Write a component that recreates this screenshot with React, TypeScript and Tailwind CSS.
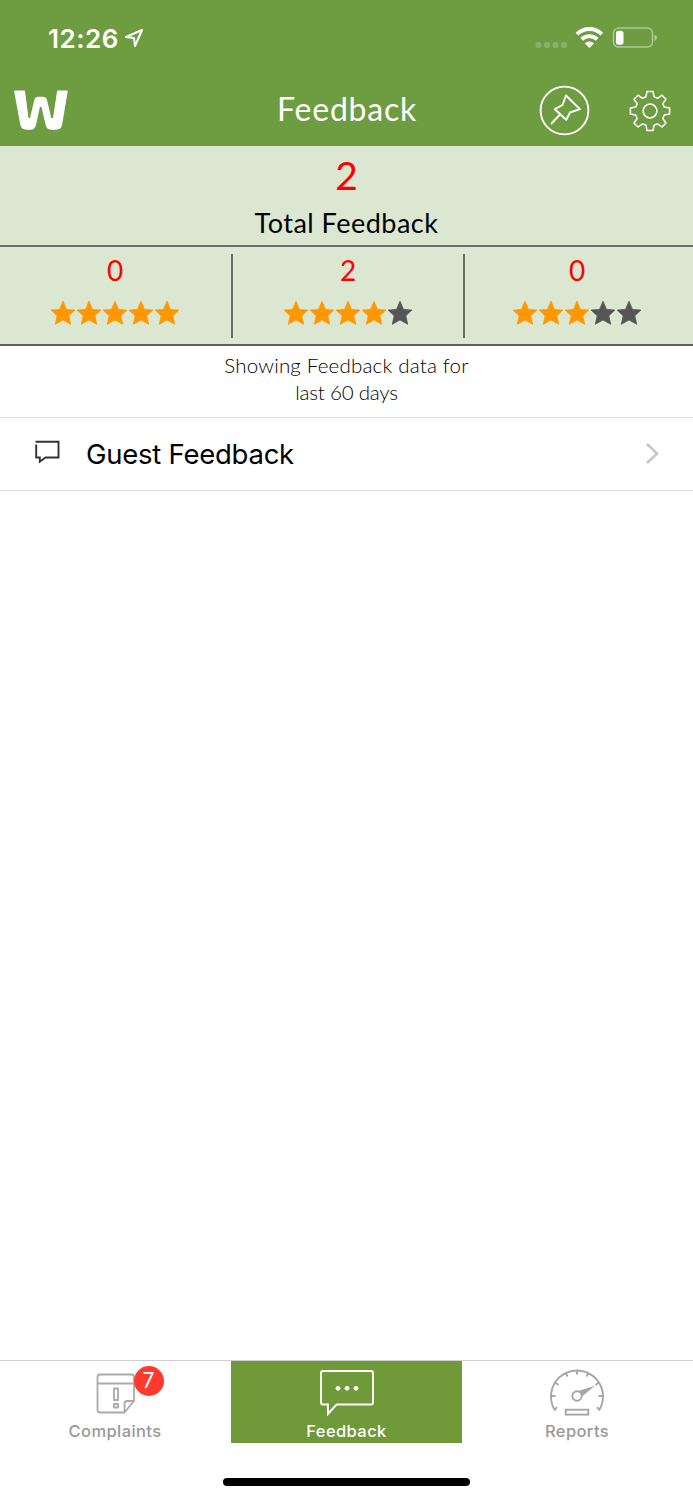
import React from "react";

const STAR = "M13 1.200 L16.500 9.400 L24.900 10.100 L18.800 15.800 L20.700 24.300 L13 19.900 L5.300 24.300 L7.200 15.800 L1.100 10.100 L9.500 9.400 Z";

function Stars({ filled }: { filled: number }) {
  return (
    <div className="flex h-[26px]">
      {[0, 1, 2, 3, 4].map((i) => (
        <svg key={i} width="26" height="26" viewBox="0 0 26 26">
          <path d={STAR} fill={i < filled ? "#ff9800" : "#555555"} stroke={i < filled ? "#ff9800" : "#555555"} strokeWidth="0.8" strokeLinejoin="round" />
        </svg>
      ))}
    </div>
  );
}

function Rating({ count, filled, className }: { count: number; filled: number; className: string }) {
  return (
    <div className={`flex flex-col items-center ${className}`}>
      <div className="h-[46px] pt-[1px] font-['Lato'] text-[28px] leading-[31px] text-[#ff0000]">{count}</div>
      <Stars filled={filled} />
    </div>
  );
}

function StatusBar() {
  return (
    <div className="flex h-[73px] items-start text-white">
      <div className="ml-[48px] mt-[22px] w-[77px] whitespace-nowrap font-['Inter'] text-[26px] font-semibold leading-[33px] tracking-[0.5px]">12:26</div>
      <svg className="mt-[28px]" width="19" height="20" viewBox="0 0 19 20" fill="none" stroke="#fff" strokeWidth="2" strokeLinejoin="round">
        <path d="M1 9 L17 2 L10 18 L9 10 Z" />
      </svg>
      <svg className="ml-[390px] mt-[26px]" width="124" height="24" viewBox="0 0 124 24" fill="none">
        <g fill="#fff" fillOpacity=".2">
          <rect x="1.500" y="16" width="6" height="6" rx="2" />
          <rect x="10" y="16" width="6" height="6" rx="2" />
          <rect x="18.500" y="16" width="6" height="6" rx="2" />
          <rect x="27" y="16" width="6" height="6" rx="2" />
        </g>
        <g stroke="#fff" strokeWidth="3.900">
          <path d="M43 8.100 A17.500 17.500 0 0 1 67.800 8.100" />
          <path d="M47.700 13.300 A11 11 0 0 1 63.100 13.300" />
        </g>
        <path d="M50.700 17.300 Q55.400 13.700 60.100 17.300 L55.400 22 Z" fill="#fff" />
        <rect x="79.500" y="2" width="39" height="19" rx="5" stroke="#fff" strokeOpacity=".45" strokeWidth="1.500" />
        <rect x="82" y="4.800" width="7.500" height="14" rx="2.500" fill="#fff" />
        <path d="M120.500 8.500 Q123 9.500 123 11.700 Q123 14 120.500 15 Z" fill="#fff" fillOpacity=".45" />
      </svg>
    </div>
  );
}

function Gear() {
  return (
    <svg width="42" height="42" viewBox="-21 -21 42 42" fill="none" stroke="#fff" strokeWidth="1.500" strokeLinejoin="round">
      <path d="M-3 -19.600 H3 L4 -14.300 L7.500 -12.700 L12 -15.800 L16 -11.800 L12.800 -7.400 L14.300 -3.900 L19.600 -3 V3 L14.300 4 L12.800 7.500 L16 12 L12 16 L7.500 12.900 L4 14.300 L3 19.600 H-3 L-4 14.300 L-7.500 12.900 L-12 16 L-16 12 L-12.800 7.500 L-14.300 4 L-19.600 3 V-3 L-14.300 -3.900 L-12.800 -7.400 L-16 -11.800 L-12 -15.800 L-7.500 -12.700 L-4 -14.300 Z" />
      <circle r="6.900" />
    </svg>
  );
}

function Header() {
  return (
    <div className="flex h-[73px] items-start">
      <svg className="ml-[14px] mt-[16px]" width="54" height="42" viewBox="0 0 54 42">
        <path d="M1.500 1.500 H10 Q11 1.500 11.100 2.500 L14.500 29 H16 L20.300 11 Q21.100 7.800 24.500 7.800 H28.700 Q32.200 7.800 33 11 L37.300 29 H39 L43 2.500 Q43.200 1.500 44.200 1.500 H52.500 Q53.900 1.500 53.700 2.800 L48.100 35.500 Q47.300 40.700 42 40.700 H37.600 Q32.700 40.700 31.600 36 L27.500 18 H25.900 L22 36 Q21 40.700 16.200 40.700 H12.300 Q7.200 40.700 6.300 35.500 L0.200 2.800 Q0 1.500 1.500 1.500 Z" fill="#fff" />
      </svg>
      <div className="ml-[209px] mt-[16px] w-[261px] whitespace-nowrap font-['Lato'] text-[32px] leading-[40px] tracking-[0.8px] text-white">Feedback</div>
      <svg className="mt-[12px]" width="52" height="52" viewBox="0 0 52 52" fill="none" stroke="#fff" strokeWidth="1.900" strokeLinejoin="round" strokeLinecap="round">
        <circle cx="26.500" cy="25.500" r="23.900" />
        <path d="M28 10.500 L42 24.200 L32 27.500 L28.300 34.800 L16.800 24.200 L24.500 20 Z M22 29.500 L13.500 38.500" />
      </svg>
      <div className="ml-[39px] mt-[17px]"><Gear /></div>
    </div>
  );
}

function TabLabel({ children }: { children: React.ReactNode }) {
  return <div className="whitespace-nowrap font-['Inter'] text-[16.5px] font-medium leading-[20px] tracking-[0.4px]">{children}</div>;
}

function TabBar() {
  return (
    <div className="flex h-[83px] border-t border-[#cfcfcf] text-[#999999]">
      <div className="flex w-[230px] flex-col items-center">
        <div className="relative ml-[1px] h-[60px] w-[40px] pt-[12px]">
          <svg width="40" height="42" viewBox="0 0 40 42" fill="none" stroke="#aaaaaa" strokeWidth="1.800" strokeLinejoin="round">
            <path d="M29 39.500 H4 Q1.500 39.500 1.500 37 V4 Q1.500 1.500 4 1.500 H35.500 Q38 1.500 38 4 V28 L28.500 39.500 V31 Q28.500 28 31.500 28 H38 M1.500 10.500 H38" />
            <path d="M18 15.500 H22 V27 H18 Z M18 31 H22 V34.500 H18 Z" />
          </svg>
          <div className="absolute left-[38px] top-[5px] flex h-[30px] w-[30px] items-center justify-center rounded-full bg-[#ff3b30] font-['Inter'] text-[21px] leading-[30px] text-white">7</div>
        </div>
        <TabLabel>Complaints</TabLabel>
      </div>
      <div className="ml-[1px] flex w-[231px] flex-col items-center bg-[#70993a] text-white">
        <div className="h-[60px] pt-[8px]">
          <svg width="54" height="48" viewBox="0 0 54 48" fill="none" stroke="#fff" strokeWidth="1.900">
            <path d="M3 2 H51 Q53 2 53 4 V33.500 Q53 35.500 51 35.500 H16.500 L8 45 V35.500 H3 Q1 35.500 1 33.500 V4 Q1 2 3 2 Z" />
            <g fill="#fff" stroke="none"><circle cx="18" cy="19.300" r="2.400" /><circle cx="27" cy="19.300" r="2.400" /><circle cx="36" cy="19.300" r="2.400" /></g>
          </svg>
        </div>
        <TabLabel>Feedback</TabLabel>
      </div>
      <div className="flex w-[230px] flex-col items-center">
        <div className="mr-[1px] h-[60px] pt-[7px]">
          <svg width="56" height="50" viewBox="0 0 56 50" fill="none" stroke="#a6a6a6" strokeWidth="1.900">
            <path d="M6.100 42.500 A26 26 0 1 1 49.900 42.500 M5.500 42.200 L8 39.200 M50.500 42.200 L48 39.200 M2 28 H6.500 M49.500 28 H54 M6.100 14.300 L9.500 17 M16.300 4.500 L18.500 8.500 M28 2 V6.500 M39.700 4.500 L37.500 8.500 M49.900 14.300 L46.500 17" />
            <circle cx="28" cy="28" r="4.700" />
            <path d="M30 22.700 L46 17.700 L33 28.500 Z" fill="#a6a6a6" stroke="none" />
            <rect x="16.800" y="41.700" width="22.500" height="4.900" />
          </svg>
        </div>
        <TabLabel>Reports</TabLabel>
      </div>
    </div>
  );
}

export default function App() {
  return (
    <div className="flex h-[1500px] w-[693px] flex-col overflow-hidden bg-white">
      <header className="h-[146px] bg-[#6e9c41]">
        <StatusBar />
        <Header />
      </header>
      <section className="flex h-[101px] flex-col items-center border-b-2 border-[#6d7269] bg-[#dce7d1] font-['Lato']">
        <div className="h-[55px] pt-[4px] text-[39px] leading-[50px] text-[#ff0000]">2</div>
        <div className="whitespace-nowrap pt-[6px] text-[27px] leading-[32px] tracking-[0.5px] text-black">Total Feedback</div>
      </section>
      <section className="flex h-[99px] border-b-2 border-[#5f635c] bg-[#dce7d1] pt-[7px]">
        <Rating count={0} filled={5} className="w-[230px]" />
        <div className="ml-[1px] h-[84px] w-[2px] bg-[#696d65]" />
        <Rating count={2} filled={4} className="w-[230px]" />
        <div className="h-[84px] w-[2px] bg-[#696d65]" />
        <Rating count={0} filled={3} className="w-[224px]" />
      </section>
      <section className="flex h-[72px] flex-col items-center border-b border-[#dddddd] pt-[6px] font-['Lato'] text-[20.5px] font-light leading-[27px] text-black">
        <div className="whitespace-nowrap tracking-[0.2px]">Showing Feedback data for</div>
        <div className="whitespace-nowrap tracking-[-0.2px]">last 60 days</div>
      </section>
      <section className="flex h-[73px] items-start border-b border-[#dddddd]">
        <svg className="ml-[34px] mt-[21px]" width="27" height="25" viewBox="0 0 27 25" fill="none" stroke="#333" strokeWidth="1.900">
          <path d="M1.500 2.800 H24.500 V18.500 H11.500 L5.800 22.700 V18.500 H2.200 V5.500" />
        </svg>
        <div className="ml-[25px] mt-[18px] w-[559px] whitespace-nowrap font-['Inter'] text-[27.5px] leading-[36px] tracking-[-0.25px] text-black">Guest Feedback</div>
        <svg className="mt-[23px]" width="16" height="24" viewBox="0 0 16 24" fill="none" stroke="#c7c7cc" strokeWidth="2.600">
          <path d="M2 3 L12 12.500 L2 22" />
        </svg>
      </section>
      <main className="flex-1" />
      <TabBar />
      <div className="flex h-[57px] items-start justify-center pt-[35px]">
        <div className="h-[8px] w-[247px] rounded-full bg-black" />
      </div>
    </div>
  );
}
